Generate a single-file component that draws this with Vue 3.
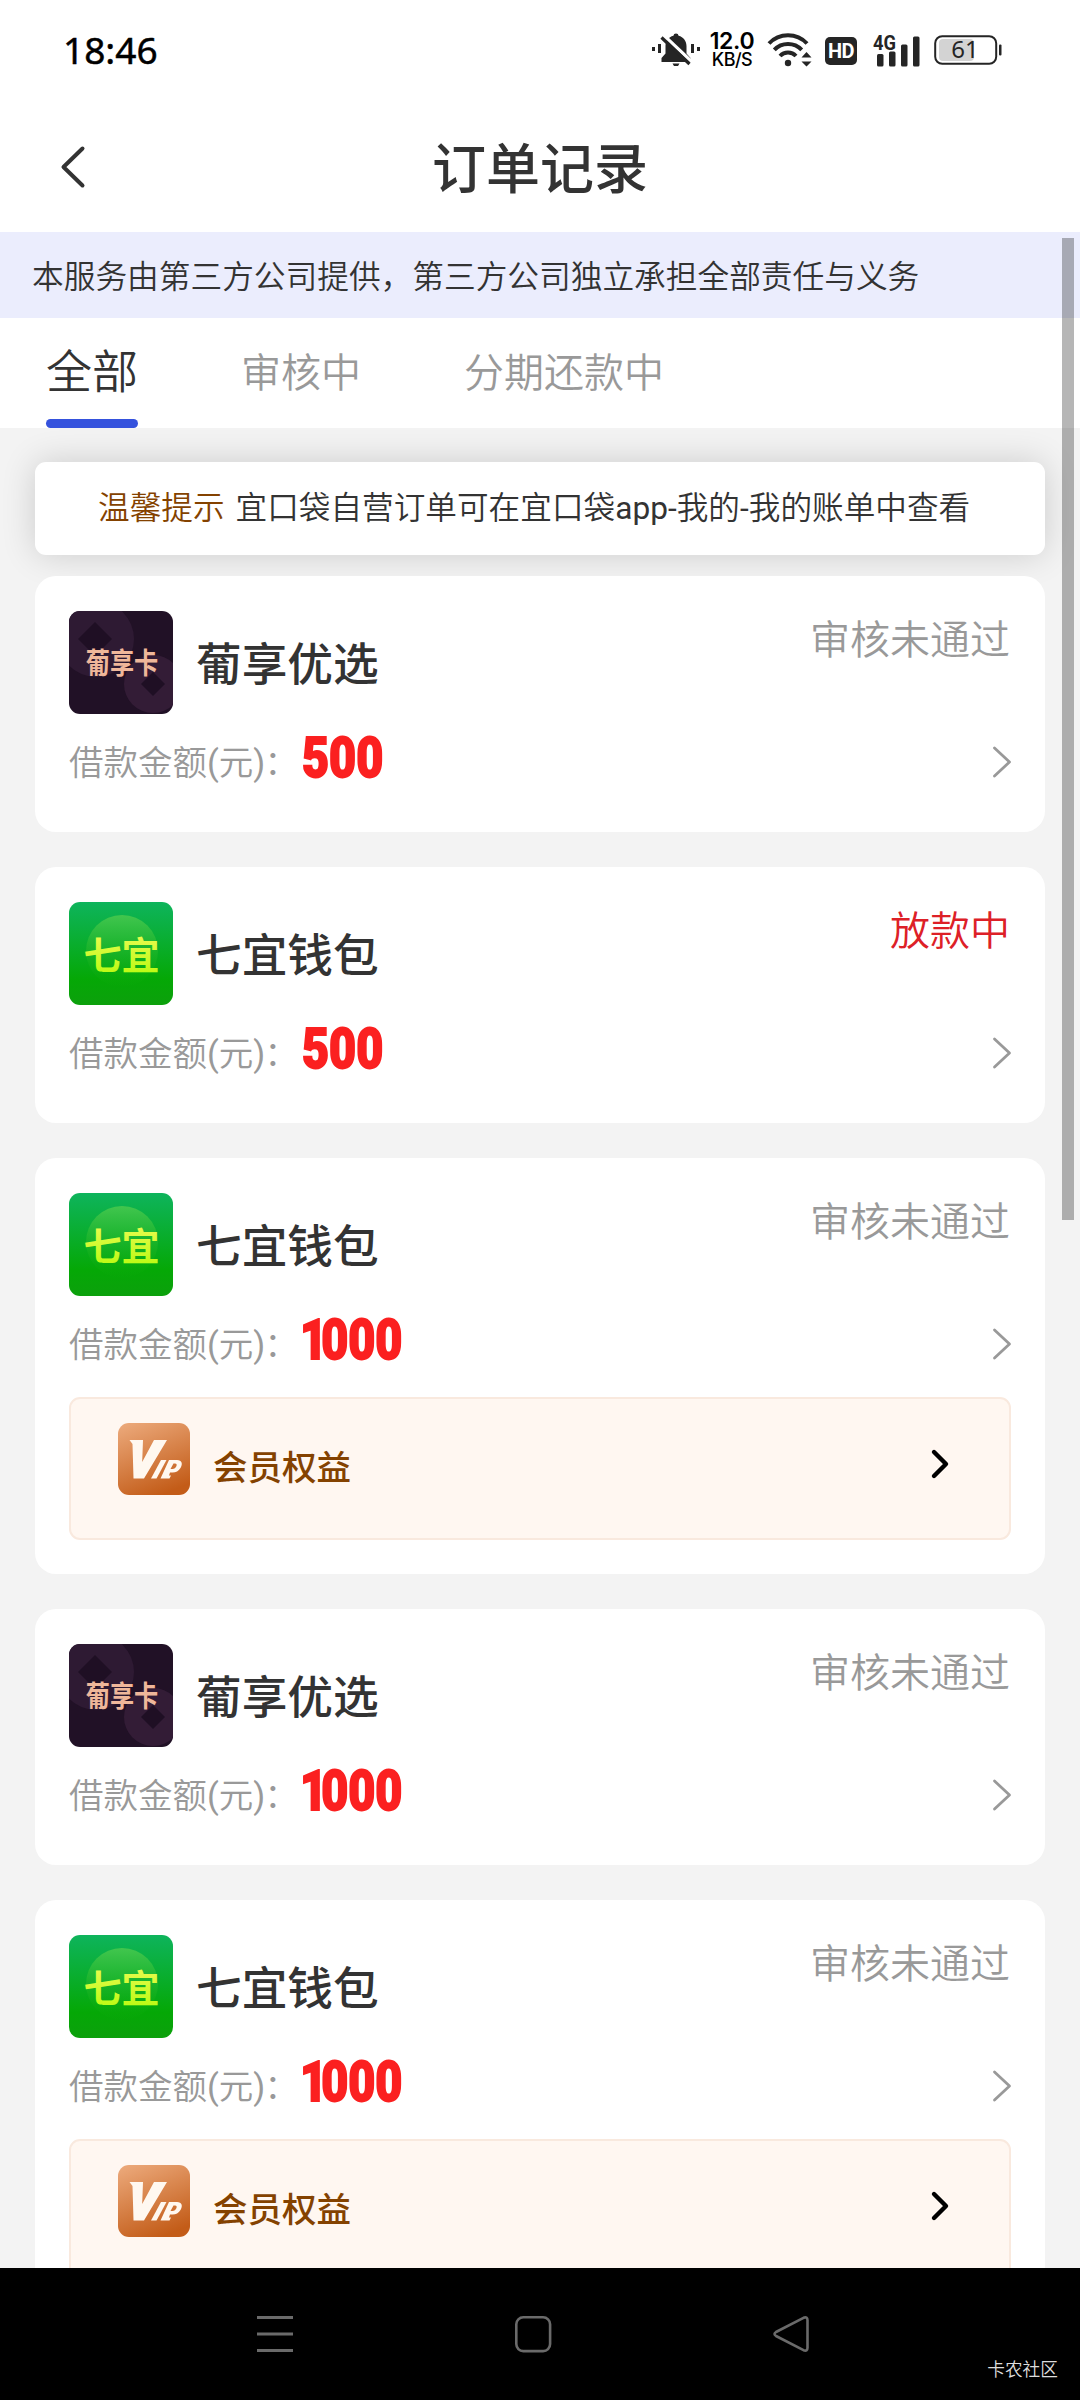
<script setup>
const tabs = [
  { label: '全部', active: true },
  { label: '审核中', active: false },
  { label: '分期还款中', active: false }
]

const orders = [
  { id: 1, brand: 'pu', name: '葡享优选', status: '审核未通过', amount: '500' },
  { id: 2, brand: 'qi', name: '七宜钱包', status: '放款中', paying: true, amount: '500' },
  { id: 3, brand: 'qi', name: '七宜钱包', status: '审核未通过', amount: '1000', vip: true },
  { id: 4, brand: 'pu', name: '葡享优选', status: '审核未通过', amount: '1000' },
  { id: 5, brand: 'qi', name: '七宜钱包', status: '审核未通过', amount: '1000', vip: true }
]
</script>

<template>
  <div class="screen">
    <div class="statusbar">
      <span class="clock">18:46</span>
      <div class="indicators">
        <svg class="bell" width="50" height="36" viewBox="0 0 50 36">
          <g fill="#252525">
            <path d="M25 1.5a2.6 2.6 0 0 1 2.6 2.2C32.500 5 35.500 9 35.500 14v7.500l4 4.500v4H10.500v-4l4-4.500V14c0-5 3-9 7.900-10.300A2.600 2.600 0 0 1 25 1.500Z" />
            <path d="M21.500 31.500h7l-1.500 2.500h-4z" />
            <rect x="1" y="15" width="3" height="4" /><rect x="7" y="12" width="3" height="9" />
            <rect x="40" y="12" width="3" height="9" /><rect x="46" y="15" width="3" height="4" />
          </g>
          <path d="M13 3.500 41 30" stroke="#fff" stroke-width="3.200" />
          <path d="M10.500 5.500 38.500 32" stroke="#252525" stroke-width="3.200" />
        </svg>
        <div class="speed"><b>12.0</b><i>KB/S</i></div>
        <svg class="wifi" width="46" height="36" viewBox="0 0 46 36">
          <g fill="none" stroke="#252525" stroke-width="4">
            <path d="M2 11.500a26 26 0 0 1 38 0" />
            <path d="M7.300 17.800a19 19 0 0 1 27.400 0" />
            <path d="M13 24a11 11 0 0 1 16 0" />
          </g>
          <circle cx="21" cy="31" r="3.200" fill="#252525" />
          <path d="M34.500 25.500 39.500 20l5 5.500zM34.500 29.500l5 5 5-5z" fill="#252525" />
        </svg>
        <div class="hd">HD</div>
        <svg class="signal" width="48" height="40" viewBox="0 -2 48 40">
          <text x="0" y="17.500" class="net" textLength="23" lengthAdjust="spacingAndGlyphs">4G</text>
          <g fill="#252525">
            <rect x="4" y="22" width="6.500" height="12.500" rx="1.500" />
            <rect x="16" y="19.500" width="6.500" height="15" rx="1.500" />
            <rect x="28" y="12.500" width="6.500" height="22" rx="1.500" />
            <rect x="40" y="4.500" width="6.500" height="30" rx="1.500" />
          </g>
        </svg>
        <svg class="battery" width="68" height="32" viewBox="0 0 68 32">
          <rect x="5" y="5" width="35" height="22" rx="4" fill="#d3d3d3" />
          <rect x="1.200" y="2.200" width="61" height="27.600" rx="7" fill="none" stroke="#252525" stroke-width="2" />
          <rect x="65" y="10.500" width="2.500" height="11" rx="1" fill="#252525" />
          <text x="31" y="24" class="pct" text-anchor="middle">61</text>
        </svg>
      </div>
    </div>

    <header class="header">
      <svg class="back" width="30" height="46" viewBox="0 0 30 46">
        <path d="M24.500 4.500 5.500 23l19 18.500" fill="none" stroke="#333" stroke-width="4" stroke-linecap="round" stroke-linejoin="round" />
      </svg>
      <h1>订单记录</h1>
    </header>

    <div class="notice">本服务由第三方公司提供，第三方公司独立承担全部责任与义务</div>

    <nav class="tabs">
      <div v-for="t in tabs" :key="t.label" class="tab" :class="{ active: t.active }">{{ t.label }}</div>
    </nav>

    <main class="content">
      <div class="tip"><span class="tip-label">温馨提示</span><span>宜口袋自营订单可在宜口袋<span class="latin">app-</span>我的<span class="latin">-</span>我的账单中查看</span></div>

      <section v-for="o in orders" :key="o.id" class="card">
        <div class="top">
          <svg v-if="o.brand === 'pu'" class="logo" width="104" height="103" viewBox="0 0 104 103">
            <rect width="104" height="103" fill="#211126" />
            <circle cx="27" cy="28" r="38" fill="#2e1a33" />
            <circle cx="84" cy="73" r="29" fill="#331c36" />
            <path d="M26 11 43 28 26 45 9 28z" fill="#1f0f24" />
            <path d="M84 61 96 73 84 85 72 73z" fill="#1f0f24" />
            <text x="0" y="0" text-anchor="middle" class="pu-text" transform="translate(53 63) scale(.93 1.12)">葡享卡</text>
          </svg>
          <svg v-else class="logo" width="104" height="103" viewBox="0 0 104 103">
            <defs>
              <linearGradient :id="'bg' + o.id" x1="0" y1="0" x2="0" y2="1">
                <stop offset="0" stop-color="#0eb45c" /><stop offset=".75" stop-color="#05a806" /><stop offset="1" stop-color="#0ca00c" />
              </linearGradient>
              <linearGradient :id="'disc' + o.id" x1="0" y1="0" x2="0" y2="1">
                <stop offset="0" stop-color="#42c64e" /><stop offset=".8" stop-color="#1bb218" stop-opacity=".2" /><stop offset="1" stop-color="#1bb218" stop-opacity="0" />
              </linearGradient>
              <linearGradient :id="'txt' + o.id" x1="0" y1="0" x2="0" y2="1">
                <stop offset="0" stop-color="#f4fb5e" /><stop offset="1" stop-color="#b4fa0a" />
              </linearGradient>
            </defs>
            <rect width="104" height="103" :fill="'url(#bg' + o.id + ')'" />
            <circle cx="53" cy="49" r="36" :fill="'url(#disc' + o.id + ')'" />
            <text x="52.500" y="67" text-anchor="middle" class="qi-text" :fill="'url(#txt' + o.id + ')'">七宜</text>
          </svg>
          <div class="name">{{ o.name }}</div>
          <div class="status" :class="{ paying: o.paying }">{{ o.status }}</div>
        </div>
        <div class="money">
          <span class="label">借款金额<span class="latin">(</span>元<span class="latin">)</span><span class="colon">：</span></span>
          <span class="amount" :class="{ 'lead-one': o.amount[0] === '1' }">{{ o.amount }}</span>
          <svg class="arrow" width="22" height="34" viewBox="0 0 22 34">
            <path d="M3.500 3 18.500 17l-15 14" fill="none" stroke="#999" stroke-width="2.800" stroke-linecap="round" stroke-linejoin="round" />
          </svg>
        </div>
        <div v-if="o.vip" class="vip">
          <svg class="vip-icon" width="72" height="72" viewBox="0 0 72 72">
            <defs>
              <linearGradient :id="'vip' + o.id" x1=".2" y1="0" x2=".6" y2="1">
                <stop offset="0" stop-color="#eaa677" /><stop offset="1" stop-color="#c35c18" />
              </linearGradient>
            </defs>
            <rect width="72" height="72" rx="11" :fill="'url(#vip' + o.id + ')'" />
            <g fill="#fff8f0">
              <path d="M11.500 17H25l-.8 22L36 17h13L26 55.500H15.500L14.500 21z" />
              <path d="M43 37h5.500L38.500 55.500H33z" />
              <path fill-rule="evenodd" d="M51 37h8c5 0 6 4 3.500 8-2 3.200-4.500 4.500-8 4.500h-2.500l-1 3h2l-1.500 3h-9zM55.500 40.500l-3 5.500h2c3.500 0 6-5.500 2.500-5.500z" />
            </g>
          </svg>
          <span class="vip-name">会员权益</span>
          <svg class="vip-arrow" width="22" height="34" viewBox="0 0 22 34">
            <path d="M5 5 17 17 5 29" fill="none" stroke="#000" stroke-width="4.400" stroke-linecap="round" stroke-linejoin="round" />
          </svg>
        </div>
      </section>
    </main>

    <footer class="navbar">
      <svg width="40" height="40" viewBox="0 0 40 40"><path d="M2 3.500h36M2 20h36M2 36.500h36" stroke="#6a6a6a" stroke-width="3" /></svg>
      <svg width="40" height="40" viewBox="0 0 40 40"><rect x="3.300" y="3.300" width="33.800" height="33.800" rx="7" fill="none" stroke="#6a6a6a" stroke-width="2.600" /></svg>
      <svg width="40" height="40" viewBox="0 0 40 40"><path d="M32.500 3.800 5 18q-3 2 0 4l27.500 14.200q4 1.500 4-2.500V6.300q0-4-4-2.500z" fill="none" stroke="#6a6a6a" stroke-width="2.600" stroke-linejoin="round" /></svg>
      <span class="mark">卡农社区</span>
    </footer>

    <div class="scrollbar"></div>
  </div>
</template>

<style>
html, body { margin: 0; background: #f3f3f3; }
</style>

<style scoped>
.screen {
  position: relative;
  width: 1080px;
  height: 2400px;
  overflow: hidden;
  display: flex;
  flex-direction: column;
  background: #f3f3f3;
  color: #333;
  font-family: Roboto, "Noto Sans CJK SC", sans-serif;
  font-weight: 350;
  white-space: nowrap;
}
.screen * { box-sizing: border-box; }
svg { display: block; flex: none; overflow: visible; }
.logo { overflow: hidden; }
.latin { font-weight: 400; }

.statusbar {
  flex: none;
  height: 100px;
  display: flex;
  justify-content: space-between;
  align-items: center;
  padding: 0 78px 0 63px;
  background: #fff;
  color: #000;
}
.clock { font: 400 37px/40px "Noto Sans", sans-serif; -webkit-text-stroke: .5px #000; }
.indicators { display: flex; align-items: center; }
.speed { width: 46px; margin-left: 8px; display: flex; flex-direction: column; align-items: center; }
.speed b { font: 600 23px/19px Inter, sans-serif; letter-spacing: -.3px; }
.speed i { font: 500 18px/17px Inter, sans-serif; letter-spacing: -.5px; }
.wifi { margin-left: 12px; }
.hd {
  width: 32px; height: 28px; margin: 2px 0 0 12px; border-radius: 5px;
  background: #252525; color: #fff; text-align: center;
  font: 700 20px/28px Roboto, sans-serif; letter-spacing: -.5px;
}
.signal { margin-left: 16px; }
.net { font: 700 21px Roboto, sans-serif; fill: #252525; }
.battery { margin-left: 13px; }
.pct { font: 400 24px "Noto Sans", sans-serif; fill: #252525; }

.header {
  flex: none;
  height: 132px;
  display: flex;
  align-items: center;
  padding: 0 58px;
  background: #fff;
}
.back { margin-top: 2px; }
h1 { flex: 1; margin: 9px 30px 0 0; text-align: center; font-size: 54px; line-height: 70px; font-weight: 500; }

.notice {
  flex: none;
  height: 86px;
  padding: 3px 0 0 32px;
  background: #ebedfd;
  font-size: 31.700px;
  line-height: 86px;
}

.tabs { flex: none; height: 110px; display: flex; background: #fff; padding-left: 46px; gap: 103px; }
.tab { height: 110px; font-size: 40px; line-height: 112px; color: #999; }
.tab.active { font-size: 46px; line-height: 108px; color: #333; position: relative; }
.tab.active::after {
  content: ""; position: absolute; left: 0; right: 0; bottom: 0; height: 9px; border-radius: 5px; background: #3552dd;
}

.content { flex: 1; min-height: 0; overflow: hidden; padding: 34px 35px 0; }
.tip {
  height: 93px;
  margin-bottom: 21px;
  padding-left: 63px;
  border-radius: 11px;
  background: #fff;
  box-shadow: 0 0 34px rgba(0, 0, 0, .16);
  font-size: 31.600px;
  letter-spacing: .04px;
  line-height: 93px;
}
.tip-label { color: #844200; margin-right: 11px; }

.card {
  position: relative;
  margin-bottom: 35px;
  padding: 35px 34px 34px;
  border-radius: 21px;
  background: #fff;
}
.top { display: flex; height: 104px; }
.logo { border-radius: 11px; }
.pu-text { font: 700 26px "Noto Sans CJK SC", sans-serif; fill: #efb79a; }
.qi-text { font: 700 38px "Noto Sans CJK SC", sans-serif; }
.name { margin-left: 23px; font-size: 45.700px; line-height: 109px; font-weight: 500; }
.status { margin: 0 1px 0 auto; font-size: 40px; line-height: 60px; color: #999; }
.status.paying { color: #dd2027; }

.money { display: flex; align-items: center; height: 83px; padding-top: 13px; }
.label { width: 232px; font-size: 34.500px; line-height: 50px; color: #999; }
.colon { margin-left: -1px; margin-right: -10px; }
.amount {
  display: block; font: 900 55px/50px Roboto, sans-serif; color: #fb2020; -webkit-text-stroke: 1.800px #fb2020;
  transform: scaleX(.85); transform-origin: 0 50%; margin: -11px 0 0 1px;
}
.amount.lead-one { margin-left: -1px; }
.amount.lead-one::first-letter { letter-spacing: -7px; }
.arrow { margin: -2px -2px 0 auto; }

.vip {
  height: 143px;
  margin-top: 17px;
  padding: 24px 58px 0 47px;
  display: flex;
  border: 2px solid #f9e9de;
  border-radius: 11px;
  background: #fff7f1;
}
.vip-name { margin-left: 23px; font-size: 34.500px; line-height: 90px; font-weight: 500; color: #844200; }
.vip-arrow { margin: 24px 0 0 auto; }

.navbar {
  position: relative;
  flex: none;
  height: 132px;
  display: flex;
  align-items: center;
  gap: 218px;
  padding: 0 0 0 255px;
  background: #000;
}
.mark { position: absolute; right: 22px; bottom: 17px; font-size: 17.700px; line-height: 26px; color: #ddd; }

.scrollbar { position: absolute; left: 1062px; top: 238px; width: 12px; height: 982px; background: rgba(0, 0, 0, .285); }
</style>
